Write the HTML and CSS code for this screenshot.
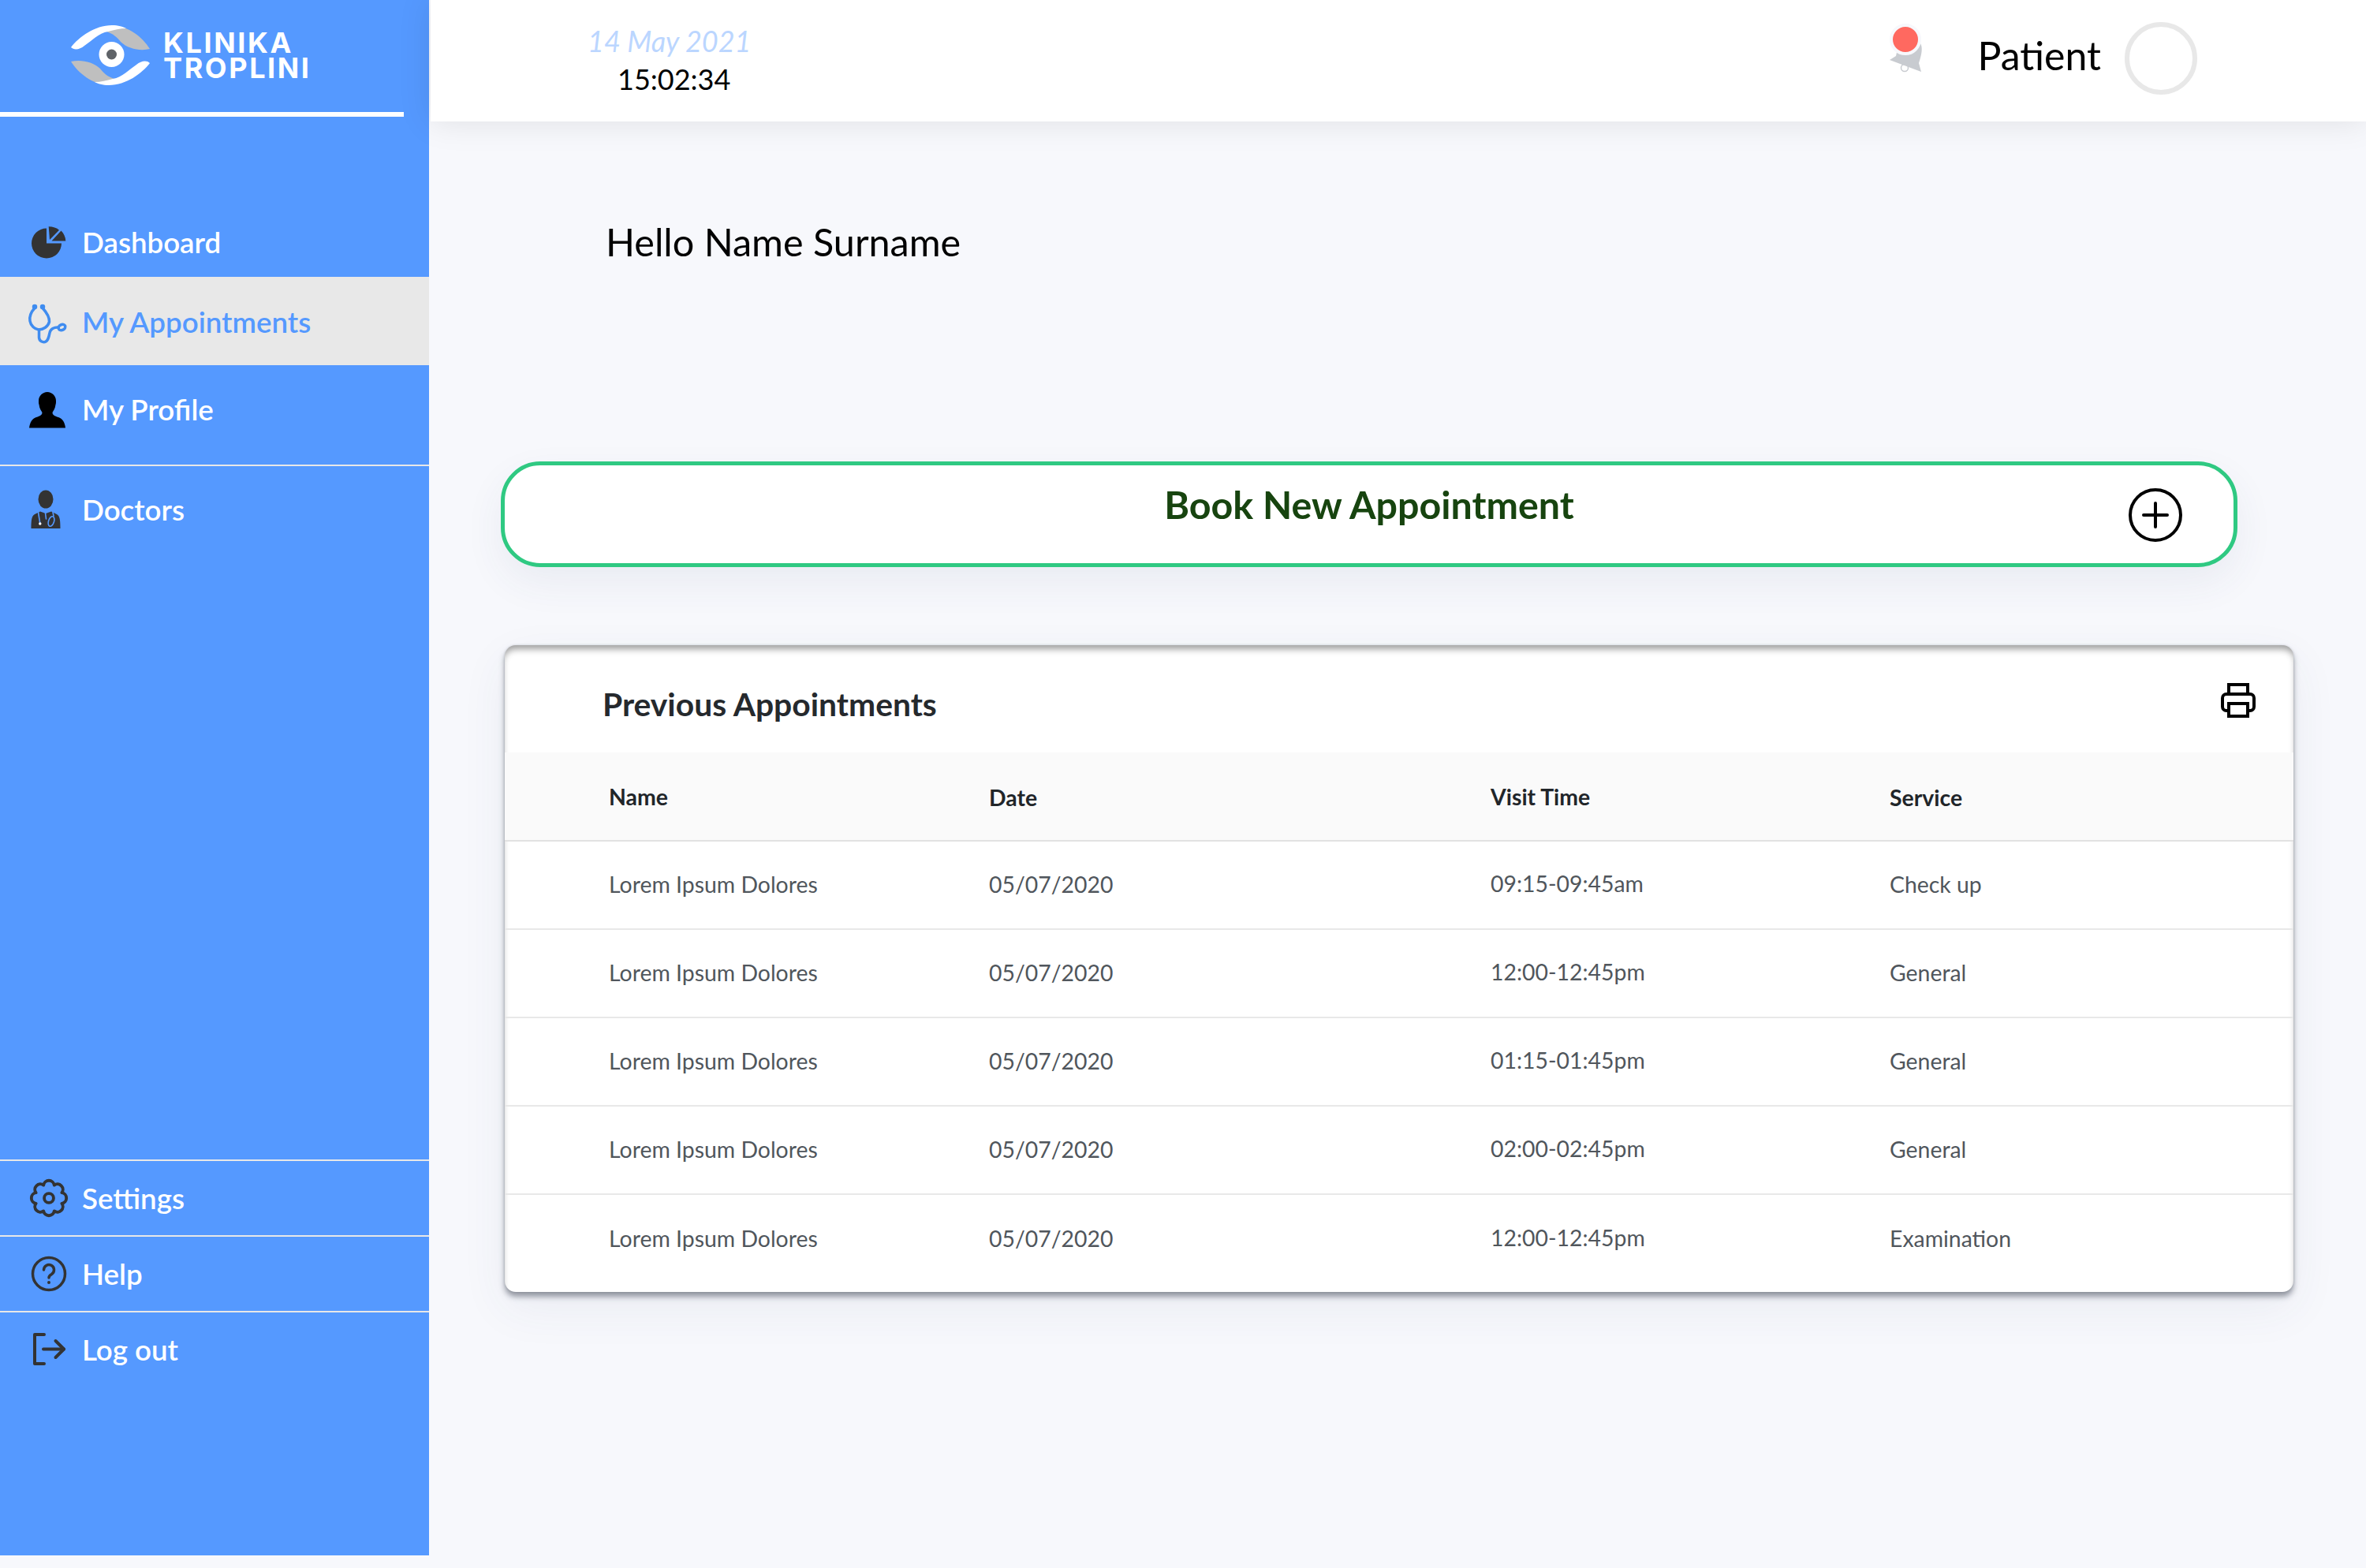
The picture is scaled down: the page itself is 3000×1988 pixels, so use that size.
FILE: index.html
```html
<!DOCTYPE html>
<html lang="en">
<head>
  <meta charset="UTF-8" />
  <title>Klinika Troplini - My Appointments</title>
  <link rel="stylesheet" href="styles.css">
</head>
<body>

  <aside class="sidebar">
    <div class="brand">
      <svg class="brand-eye" viewBox="0 0 100 76">
        <g id="blade">
          <path fill="#bfbfbf" d="M50 1C70-1 90 14 100 30C88 33 72 30 63 21C58 15 54 11 45 8Z"/>
          <path fill="#fff" d="M0 28C10 15 30 0 52 0C60 0 66 2 70 4C62 4 55 6 47 8C35 10 26 20 17 26C11 31 4 32 0 28Z"/>
        </g>
        <use href="#blade" transform="rotate(180 50 38)"/>
        <circle cx="51.5" cy="37" r="16" fill="#fff"/>
        <circle cx="51.5" cy="37" r="6.5" fill="#5f6368"/>
      </svg>
      <div class="brand-name">KLINIKA<br>TROPLINI</div>
    </div>

    <nav class="nav nav-top">
      <a class="nav-item item-dashboard">
        <svg class="nav-icon" viewBox="0 0 48 48" fill="#333">
          <path d="M23 25.5V6.5A19 19 0 1 0 42 25.5Z"/>
          <path d="M25.7 4.3C31 4.3 36 6 39 8.7L27 21Z"/>
          <path d="M29.5 22.5L41.5 9.5C45 13 47 17.5 47.3 22.5Z"/>
        </svg>
        Dashboard
      </a>
      <a class="nav-item item-active">
        <svg class="nav-icon" viewBox="0 0 48 48" fill="none" stroke="#3f8cf0" stroke-width="3.500" stroke-linecap="round">
          <path d="M8 6.500C3 12 1 17 2 23C3 29 8 33.500 13 34C19 34 25 30 26.500 24C27 18 22 11 18 6.500"/>
          <path d="M13.500 34V44C14 49 18 50 21 49.500C25 48.500 26 43 27 38C28 33 33 31 37 31"/>
          <ellipse cx="42.500" cy="31" rx="4.500" ry="3.500" transform="rotate(-25 42.500 31)"/>
          <circle cx="8" cy="5" r="1.500" fill="#3f8cf0"/>
          <circle cx="18" cy="5" r="1.500" fill="#3f8cf0"/>
        </svg>
        My Appointments
      </a>
      <a class="nav-item item-profile">
        <svg class="nav-icon" viewBox="0 0 48 48" fill="#000">
          <path d="M24 2C30 2 35 7 35 13C35 15 35 17 34.5 18C34 23 31.5 26 30.5 28C30.5 31 33 32.5 38 34C43 35.5 46 40 47 47.5H1C2 40 5 35.5 10 34C15 32.5 17.5 31 17.5 28C16.5 26 14 23 13.5 18C13 17 13 15 13 13C13 7 18 2 24 2Z"/>
        </svg>
        My Profile
      </a>
      <a class="nav-item item-doctors">
        <svg class="nav-icon" viewBox="0 0 48 48">
          <ellipse cx="22" cy="11" rx="9.5" ry="11.5" fill="#333"/>
          <path fill="#333" d="M3.5 48C3.5 38 4 32 8 30L15 26.5L22 29L29 26.5L36 30C40 32 40.5 38 40.5 48Z"/>
          <g fill="none" stroke="#5599ff" stroke-width="1.6" stroke-linecap="round">
            <path d="M12.5 27.5L14.7 41"/>
            <path d="M21.5 28.5L22.5 36"/>
            <path d="M31 27.5L32 32"/>
            <ellipse cx="29" cy="39" rx="3.5" ry="6.5" transform="rotate(18 29 39)"/>
          </g>
          <circle cx="14.8" cy="42" r="1.7" fill="#fff"/>
        </svg>
        Doctors
      </a>
    </nav>

    <nav class="nav nav-bottom">
      <a class="nav-item item-small">
        <svg class="nav-icon" viewBox="-0.1 1.75 44.5 44.5" fill="none" stroke="#333" stroke-width="3.600" stroke-linejoin="round">
          <path d="M17.69 8.76A6.4 6.4 0 0 1 30.31 8.76A6.4 6.4 0 0 1 39.24 17.69A6.4 6.4 0 0 1 39.24 30.31A6.4 6.4 0 0 1 30.31 39.24A6.4 6.4 0 0 1 17.69 39.24A6.4 6.4 0 0 1 8.76 30.31A6.4 6.4 0 0 1 8.76 17.69A6.4 6.4 0 0 1 17.69 8.76Z"/>
          <circle cx="24" cy="24" r="5.5"/>
        </svg>
        Settings
      </a>
      <a class="nav-item item-small">
        <svg class="nav-icon" viewBox="-2 0 48 48" fill="none" stroke="#333" stroke-width="3.5" stroke-linecap="round">
          <circle cx="24" cy="24" r="20.5"/>
          <path d="M17.5 19a6.5 6.5 0 1 1 10 5.5c-2.200 1.300-3.500 2.400-3.500 4.500"/>
          <circle cx="24" cy="35" r="1" fill="#333" stroke-width="2"/>
        </svg>
        Help
      </a>
      <a class="nav-item item-small">
        <svg class="nav-icon" viewBox="0 0 48 48" fill="none" stroke="#333" stroke-width="4" stroke-linecap="round" stroke-linejoin="round">
          <path d="M20 5H8V42H20"/>
          <path d="M19 23.500H45"/>
          <path d="M34.500 13L45 23.500L34.500 34"/>
        </svg>
        Log out
      </a>
    </nav>
  </aside>

  <div class="main">
    <header class="topbar">
      <div class="clock">
        <div class="clock-date">14 May 2021</div>
        <div class="clock-time">15:02:34</div>
      </div>
      <div class="user">
        <div class="bell">
          <svg class="bell-icon" viewBox="0 0 42 58">
            <circle cx="19" cy="52" r="4.500" fill="#fff" stroke="#c8cbd0" stroke-width="1.500"/>
            <path fill="#c8cbd0" d="M0 42L8 37L10 28C14 18 32 12 39 21C42 26 41 34 37 46L40 57Z"/>
          </svg>
          <span class="bell-dot"></span>
        </div>
        <div class="user-role">Patient</div>
        <div class="avatar"></div>
      </div>
    </header>

    <div class="content">
      <h1 class="hello">Hello Name Surname</h1>

      <button type="button" class="book">
        <span></span>
        <span class="book-label">Book New Appointment</span>
        <svg class="book-plus" viewBox="0 0 68 68" fill="none" stroke="#000" stroke-width="4" stroke-linecap="round">
          <circle cx="34" cy="34" r="32"/>
          <path d="M34 19V49M19 34H49"/>
        </svg>
      </button>

      <section class="card">
        <div class="card-head">
          <h2 class="card-title">Previous Appointments</h2>
          <svg class="print-icon" viewBox="0 0 44 44" fill="none" stroke="#000" stroke-width="4">
            <path d="M10 14V2H34V14"/>
            <path d="M10 35H7a5 5 0 0 1-5-5V19a5 5 0 0 1 5-5H37a5 5 0 0 1 5 5V30a5 5 0 0 1-5 5H34"/>
            <rect x="10" y="26" width="24" height="16"/>
          </svg>
        </div>
        <table class="visits">
          <thead>
            <tr>
              <th class="col-name">Name</th>
              <th class="col-date">Date</th>
              <th class="col-time">Visit Time</th>
              <th class="col-service">Service</th>
            </tr>
          </thead>
          <tbody>
            <tr>
              <td>Lorem Ipsum Dolores</td>
              <td>05/07/2020</td>
              <td class="cell-time">09:15-09:45am</td>
              <td>Check up</td>
            </tr>
            <tr>
              <td>Lorem Ipsum Dolores</td>
              <td>05/07/2020</td>
              <td class="cell-time">12:00-12:45pm</td>
              <td>General</td>
            </tr>
            <tr>
              <td>Lorem Ipsum Dolores</td>
              <td>05/07/2020</td>
              <td class="cell-time">01:15-01:45pm</td>
              <td>General</td>
            </tr>
            <tr>
              <td>Lorem Ipsum Dolores</td>
              <td>05/07/2020</td>
              <td class="cell-time">02:00-02:45pm</td>
              <td>General</td>
            </tr>
            <tr>
              <td>Lorem Ipsum Dolores</td>
              <td>05/07/2020</td>
              <td class="cell-time">12:00-12:45pm</td>
              <td>Examination</td>
            </tr>
          </tbody>
        </table>
      </section>
    </div>
  </div>

</body>
</html>
```

FILE: styles.css
```css
* {
  box-sizing: border-box;
}
html, body {
  margin: 0;
  height: 1988px;
  overflow: hidden;
}
body {
  display: flex;
  align-items: flex-start;
  font-family: Lato, "Open Sans", sans-serif;
  background: #f7f8fc;
  color: #000;
}

/* sidebar */
.sidebar {
  flex: none;
  display: flex;
  flex-direction: column;
  width: 544px;
  height: 1972px;
  background: #5599ff;
}
.brand {
  display: flex;
  align-items: center;
  gap: 17px;
  width: 512px;
  height: 148px;
  padding: 0 0 2px 90px;
  border-bottom: 6px solid #fff;
}
.brand-eye {
  width: 100px;
  height: 76px;
}
.brand-name {
  font-family: Inter, sans-serif;
  font-size: 36px;
  font-weight: 700;
  line-height: 32px;
  letter-spacing: 2.6px;
  color: #fff;
}
.nav {
  display: flex;
  flex-direction: column;
}
.nav-top {
  padding-top: 115px;
}
.nav-bottom {
  margin-top: auto;
  margin-bottom: 214px;
}
.nav-item {
  display: flex;
  align-items: center;
  gap: 20px;
  padding-left: 36px;
  font-size: 36.7px;
  font-weight: 600;
  color: #fff;
}
.nav-icon {
  flex: none;
  width: 48px;
  height: 48px;
  overflow: visible;
}
.item-dashboard {
  height: 88px;
}
.item-active {
  height: 112px;
  padding-top: 2px;
  background: #e8e8e8;
  color: #5599ff;
}
.item-profile {
  height: 128px;
  padding-bottom: 14px;
  border-bottom: 2px solid #e8e8e8;
}
.item-doctors {
  height: 110px;
}
.item-small {
  height: 96px;
  border-top: 2px solid #e8e8e8;
}

/* top bar */
.main {
  flex: 1;
  min-width: 0;
  padding-left: 2px;
}
.topbar {
  position: relative;
  display: flex;
  align-items: center;
  justify-content: space-between;
  height: 154px;
  padding: 0 214px 6px 199px;
  background: #fff;
  box-shadow: 0 0 40px rgba(0, 0, 0, 0.1);
}
.clock {
  margin-top: 3px;
  font-size: 36px;
  line-height: 48px;
}
.clock-date {
  font-style: italic;
  color: #bbd6ff;
}
.clock-time {
  padding-left: 12px;
  text-align: center;
}
.user {
  display: flex;
  align-items: center;
}
.bell {
  position: relative;
  width: 42px;
  height: 58px;
  margin: 0 70px 22px 0;
}
.bell-icon {
  display: block;
  width: 42px;
  height: 58px;
}
.bell-dot {
  position: absolute;
  left: 0;
  top: -4px;
  width: 40px;
  height: 40px;
  border: 4px solid #f7f8fc;
  border-radius: 50%;
  background: #ff6960;
}
.user-role {
  margin: 0 30px 8px 0;
  font-size: 50px;
  line-height: 60px;
}
.avatar {
  width: 92px;
  height: 92px;
  border: 6px solid #e8e8e8;
  border-radius: 50%;
  background: #fff;
}

/* content */
.content {
  padding: 122px 0 0 89px;
}
.hello {
  margin: 0 0 0 133px;
  font-size: 48.5px;
  font-weight: 400;
  line-height: 60px;
}
.book {
  display: grid;
  grid-template-columns: 1fr auto 1fr;
  align-items: center;
  width: 2202px;
  height: 134px;
  margin-top: 249px;
  padding: 0 65px;
  border: 5px solid #2fc982;
  border-radius: 50px;
  background: #fff;
  box-shadow: 0 20px 50px rgba(60, 70, 110, 0.07);
  font-family: inherit;
}
.book-label {
  padding-bottom: 26px;
  font-size: 48.4px;
  font-weight: 700;
  line-height: 60px;
  color: #17440f;
}
.book-plus {
  justify-self: end;
  width: 68px;
  height: 68px;
  margin-top: 1px;
}
.card {
  width: 2268px;
  height: 820px;
  margin: 99px 0 0 5px;
  border-radius: 14px;
  background: #fff;
  box-shadow: 0 6px 7px rgba(60, 65, 80, 0.5), 0 0 3px rgba(70, 75, 90, 0.2),
    0 20px 60px rgba(60, 70, 110, 0.07), inset 0 8px 8px -3px rgba(0, 0, 0, 0.38);
}
.card-head {
  display: flex;
  align-items: center;
  justify-content: space-between;
  height: 136px;
  padding: 0 48px 0 124px;
}
.card-title {
  margin: 14px 0 0;
  font-size: 40.8px;
  font-weight: 700;
  line-height: 50px;
  color: #25292d;
}
.print-icon {
  width: 44px;
  height: 44px;
  margin-top: 4px;
}
.visits {
  width: 100%;
  table-layout: fixed;
  border-collapse: collapse;
  font-size: 28.4px;
  color: #50565c;
}
.visits th {
  height: 112px;
  padding: 0;
  background: #fafafa;
  border-bottom: 2px solid #e2e2e2;
  text-align: left;
  font-weight: 700;
  color: #212529;
}
.visits td {
  height: 112px;
  padding: 0 0 2px;
  border-bottom: 2px solid #e8e8e8;
}
.visits tr:last-child td {
  height: 124px;
  border-bottom: 0;
  padding-bottom: 14px;
}
.visits th:first-child,
.visits td:first-child {
  padding-left: 132px;
}
.col-name {
  width: 614px;
}
.col-date {
  width: 636px;
}
.col-time {
  width: 506px;
}
.visits .col-date,
.visits .col-service {
  padding-top: 2px;
}
.visits .cell-time {
  padding-bottom: 4px;
}
.visits tr:last-child .cell-time {
  padding-bottom: 16px;
}
```
